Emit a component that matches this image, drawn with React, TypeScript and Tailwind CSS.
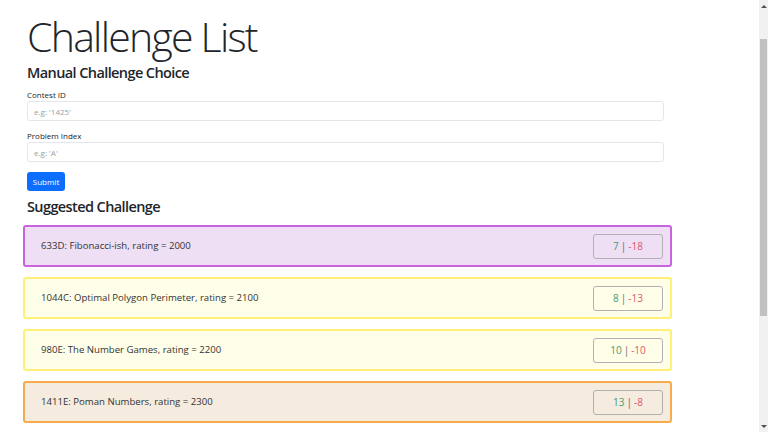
import React from "react";

type Challenge = {
  id: string;
  name: string;
  rating: number;
  solved: number;
  failed: number;
  tone: string;
};

const challenges: Challenge[] = [
  { id: "633D", name: "Fibonacci-ish", rating: 2000, solved: 7, failed: -18, tone: "border-[#c965dc] bg-[#eedff5]" },
  { id: "1044C", name: "Optimal Polygon Perimeter", rating: 2100, solved: 8, failed: -13, tone: "border-[#fff176] bg-[#fffee9]" },
  { id: "980E", name: "The Number Games", rating: 2200, solved: 10, failed: -10, tone: "border-[#fff176] bg-[#fffee9]" },
  { id: "1411E", name: "Poman Numbers", rating: 2300, solved: 13, failed: -8, tone: "border-[#f6ac4c] bg-[#f5ebdf]" },
];

function Field({ label, placeholder, gap }: { label: string; placeholder: string; gap: string }) {
  return (
    <div className={gap}>
      <label className="block h-[12px] text-[8px] leading-[12px] text-[#212529]">{label}</label>
      <input
        placeholder={placeholder}
        className="block h-[20px] w-[637px] rounded-[3px] border border-[#e3e6ea] bg-white px-[6px] text-[8px] text-[#212529] outline-none placeholder:text-[#9a9fa4]"
      />
    </div>
  );
}

function ScrollBar() {
  return (
    <div className="flex h-full w-[9px] flex-col bg-[#f1f1f1]">
      <div className="flex h-[12px] items-center justify-center">
        <div className="h-0 w-0 border-x-[3px] border-b-[3px] border-x-transparent border-b-[#505050]" />
      </div>
      <div className="h-[27px]" />
      <div className="mx-[1px] h-[277px] bg-[#c1c1c1]" />
      <div className="flex-1" />
      <div className="flex h-[12px] items-center justify-center">
        <div className="h-0 w-0 border-x-[3px] border-t-[3px] border-x-transparent border-t-[#505050]" />
      </div>
    </div>
  );
}

export default function App() {
  return (
    <div className="flex h-screen w-full overflow-hidden bg-white font-['Open_Sans',sans-serif] text-[#212529]">
      <main className="flex-1 pl-[23px] pt-[14px]">
        <div className="pl-[4px]">
          <h1 className="h-[44px] text-[41px] font-light leading-[44px] tracking-[-1.75px]">Challenge List</h1>
          <h2 className="mt-[5px] h-[20px] text-[14.5px] font-semibold leading-[20px] tracking-[-0.6px]">
            Manual Challenge Choice
          </h2>
          <Field label="Contest ID" placeholder="e.g: '1425'" gap="mt-[6px]" />
          <Field label="Problem Index" placeholder="e.g: 'A'" gap="mt-[9px]" />
          <button className="mt-[10px] flex h-[19px] w-[38px] items-center justify-center rounded-[3px] bg-[#0d6efd] text-[8px] text-white">
            Submit
          </button>
          <h2 className="mt-[6px] h-[20px] text-[14.5px] font-semibold leading-[20px] tracking-[-0.6px]">
            Suggested Challenge
          </h2>
        </div>
        <div className="mt-[8px] flex w-[649px] flex-col gap-[10px]">
          {challenges.map((c) => (
            <div
              key={c.id}
              className={`flex h-[42px] items-center justify-between rounded-[3px] border-2 pl-[16px] pr-[7px] ${c.tone}`}
            >
              <span className="text-[9.6px] text-[#333]">
                {c.id}: {c.name}, rating = {c.rating}
              </span>
              <div className="flex h-[25px] w-[70px] items-center justify-center rounded-[3px] border border-[#b3b0b3] text-[10px]">
                <span className="text-[#4a9a72]">{c.solved}</span>
                <span className="mx-[2px] text-[#666]">|</span>
                <span className="text-[#e0596a]">{c.failed}</span>
              </div>
            </div>
          ))}
        </div>
      </main>
      <ScrollBar />
    </div>
  );
}
